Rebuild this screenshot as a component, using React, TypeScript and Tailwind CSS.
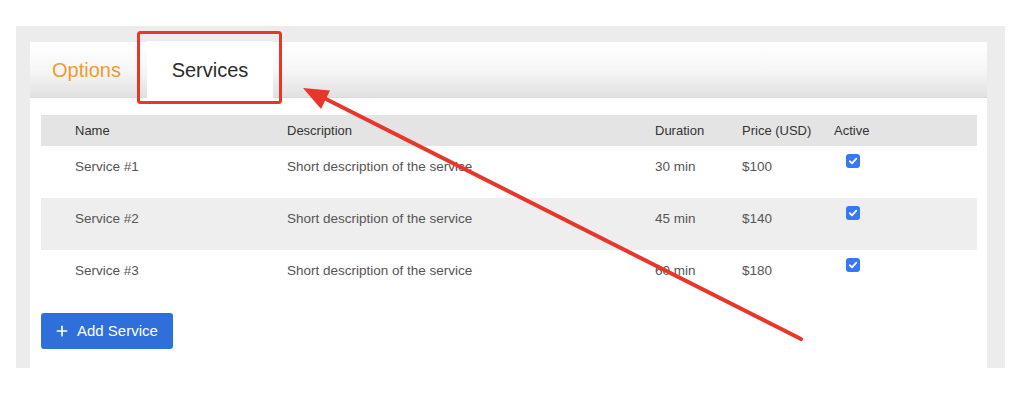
import { Plus } from 'lucide-react'

const services = [
  { name: 'Service #1', desc: 'Short description of the service', duration: '30 min', price: '$100' },
  { name: 'Service #2', desc: 'Short description of the service', duration: '45 min', price: '$140' },
  { name: 'Service #3', desc: 'Short description of the service', duration: '60 min', price: '$180' },
]

const cols = 'grid grid-cols-[212px_368px_87px_92px_37px] pl-[34px]'

function Check() {
  return (
    <span className="w-[14px] h-[14px] rounded-[3px] bg-[#3478f6] flex items-center justify-center">
      <svg width="10" height="10" viewBox="0 0 10 10" fill="none">
        <path d="M1.8 5.2 L4 7.4 L8.3 2.6" stroke="white" strokeWidth="1.8" strokeLinecap="round" strokeLinejoin="round" />
      </svg>
    </span>
  )
}

// red annotation drawn on top of the screenshot
function Annotation() {
  return (
    <svg className="absolute inset-0 pointer-events-none" width="1024" height="402" viewBox="0 0 1024 402">
      <rect x="138.5" y="32.5" width="142" height="70" rx="2" fill="none" stroke="#e8362b" strokeWidth="3" />
      <line x1="801" y1="339" x2="322" y2="97" stroke="#e8362b" strokeWidth="4" strokeLinecap="round" />
      <polygon points="303,88 330,90.5 321,109" fill="#e8362b" />
    </svg>
  )
}

export default function App() {
  return (
    <div className="relative w-[1024px] h-[402px] bg-white font-['Liberation_Sans',Arial,sans-serif]">
      <div className="pt-[26px] pl-[16px] pr-[19px]">
        <div className="bg-[#ececec] pt-[16px] pl-[14px] pr-[18px] h-[342px]">
          <div className="bg-white h-full">
            <div className="h-[56px] flex items-end bg-gradient-to-b from-white via-[#f7f7f7] to-[#e1e1e1] border-b border-[#d9d9d9]">
              <div className="w-[117px] h-full flex items-center pl-[22px] text-[20px] text-[#f39a2b]">Options</div>
              <div className="w-[126px] h-[57px] -mb-px bg-white flex items-center justify-center text-[20px] text-[#2b2b2b]">Services</div>
            </div>

            <div className="pl-[11px] pr-[10px] pt-[17px]">
              <div className={`${cols} h-[31px] items-center bg-[#e4e4e4] text-[13px] text-[#333]`}>
                <span>Name</span>
                <span>Description</span>
                <span>Duration</span>
                <span>Price (USD)</span>
                <span>Active</span>
              </div>
              {services.map((s, i) => (
                <div key={s.name} className={`${cols} h-[52px] pt-[11px] text-[13.5px] text-[#555] ${i === 1 ? 'bg-[#eeeeee]' : ''}`}>
                  <span>{s.name}</span>
                  <span>{s.desc}</span>
                  <span>{s.duration}</span>
                  <span>{s.price}</span>
                  <span className="flex justify-center -mt-[3px]"><Check /></span>
                </div>
              ))}

              <button className="mt-[11px] w-[132px] h-[36px] rounded-[3px] bg-[#2e6fd9] text-white text-[15px] flex items-center gap-[7px] pl-[13px]">
                <Plus size={16} strokeWidth={2.5} />
                Add Service
              </button>
            </div>
          </div>
        </div>
      </div>
      <Annotation />
    </div>
  )
}
